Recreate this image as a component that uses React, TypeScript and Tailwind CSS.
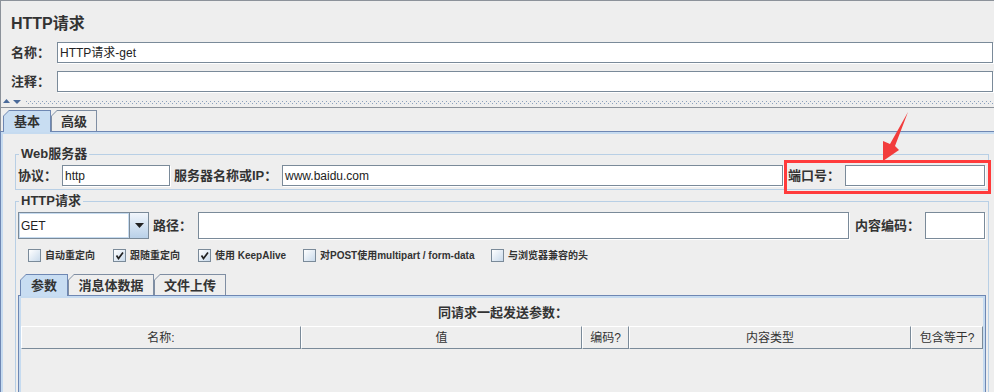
import React from "react";

const border = "border-[#7a8a99]";

function TextBox({ value = "", className = "" }: { value?: string; className?: string }) {
  return (
    <div
      className={`flex items-center border ${border} bg-white pl-[2px] text-[12px] text-[#222] shadow-[1px_1px_0_#ffffff] ${className}`}
    >
      {value}
    </div>
  );
}

function Label({ text, className = "" }: { text: string; className?: string }) {
  return <div className={`shrink-0 text-[13px] font-bold text-[#333] whitespace-nowrap ${className}`}>{text}</div>;
}

function Tab({ label, active, width }: { label: string; active?: boolean; width: string }) {
  return (
    <div
      className={`relative ${active ? "z-10 -mb-px h-[22px] bg-[#6e87b3]" : "h-[21px] bg-[#7f8ea3]"} ${width} px-px pt-px [clip-path:polygon(6px_0,100%_0,100%_100%,0_100%,0_6px)]`}
    >
      <div
        className={`flex h-full items-center justify-center pt-px text-[13px] font-bold text-[#333] ${active ? "bg-[#c8ddf2]" : "bg-[#eeeeee]"} [clip-path:polygon(5px_0,100%_0,100%_100%,0_100%,0_5px)]`}
      >
        {label}
      </div>
    </div>
  );
}

function Check({ checked, label, width }: { checked?: boolean; label: string; width?: string }) {
  return (
    <div className={`flex h-[13px] items-center ${width ?? ""}`}>
      <div className={`relative h-[13px] w-[13px] shrink-0 border ${border} bg-gradient-to-br from-white to-[#c9daeb]`}>
        {checked && (
          <svg className="absolute left-0 top-0" width="11" height="11" viewBox="0 0 11 11">
            <path d="M2.5 5.5 L4.5 8.5 L9 2.5" fill="none" stroke="#222" strokeWidth="1.7" />
          </svg>
        )}
      </div>
      <span className="ml-[4px] whitespace-nowrap text-[10px] font-bold text-[#333]">{label}</span>
    </div>
  );
}

function Group({ title, className = "", children }: { title: string; className?: string; children: React.ReactNode }) {
  return (
    <div className={`relative ml-[14px] w-[974px] border border-[#b8cfe5] ${className}`}>
      <div className="absolute left-[3px] top-[-9px] bg-[#eeeeee] px-[2px] text-[13px] font-bold leading-[16px] text-[#333]">
        {title}
      </div>
      {children}
    </div>
  );
}

const headers: [string, string][] = [
  ["名称:", "w-[280px]"],
  ["值", "w-[281px]"],
  ["编码?", "w-[47px]"],
  ["内容类型", "w-[282px]"],
  ["包含等于?", "w-[72px]"],
];

export default function App() {
  return (
    <div className="relative h-[392px] w-[994px] overflow-hidden bg-[#eeeeee] font-['Liberation_Sans','Noto_Sans_CJK_SC',sans-serif] text-[#333]">
      {/* header area */}
      <div className="border-l border-t border-[#8c929a] pl-[10px] pr-px pt-[13px]">
        <div className="text-[16px] font-bold leading-[20px] text-[#333]">HTTP请求</div>
        <div className="mt-[8px] flex h-[21px] items-center">
          <Label text="名称：" className="w-[46px]" />
          <TextBox value="HTTP请求-get" className="h-full flex-1" />
        </div>
        <div className="mt-[8px] flex h-[21px] items-center">
          <Label text="注释：" className="w-[46px]" />
          <TextBox className="h-full flex-1" />
        </div>
      </div>

      {/* split divider */}
      <div className="flex h-[16px] items-start border-b border-l border-[#8c929a] pl-[2px] pt-[7px]">
        <svg width="20" height="5" viewBox="0 0 20 5" className="shrink-0">
          <polygon points="0,4 3.5,0 7,4" fill="#4a6a9a" />
          <polygon points="10,1 18,1 14,5" fill="#4a6a9a" />
        </svg>
        <div className="ml-[3px] flex-1 pt-[2px]">
          <div className="h-px bg-[linear-gradient(90deg,#8aa0bd_1px,transparent_1px)] bg-[length:4px_1px]" />
          <div className="mt-px h-px bg-[linear-gradient(90deg,#8aa0bd_1px,transparent_1px)] bg-[length:4px_1px] bg-[position:2px_0]" />
        </div>
      </div>

      {/* outer tabs */}
      <div className="flex h-[23px] items-end border-l border-[#8c929a] pl-[2px]">
        <Tab label="基本" active width="w-[48px]" />
        <Tab label="高级" width="w-[46px]" />
      </div>

      <div className="h-[270px] w-[1000px] border-l border-t border-[#6e87b3] shadow-[inset_2px_2px_0_#c6dbf0]">
        <Group title="Web服务器" className="mt-[22px] pb-[3px] pl-px pr-[3px] pt-[10px]">
          <div className="flex h-[21px] items-center pl-px">
            <Label text="协议：" className="w-[44px]" />
            <TextBox value="http" className="h-full w-[108px]" />
            <Label text="服务器名称或IP：" className="ml-[4px] w-[108px]" />
            <TextBox value="www.baidu.com" className="h-full flex-1" />
            <Label text="端口号：" className="ml-[5px] w-[57px]" />
            <TextBox className="h-full w-[140px]" />
          </div>
        </Group>

        <Group title="HTTP请求" className="mt-[11px] h-[220px] pl-[2px] pr-[3px] pt-[10px]">
          <div className="flex h-[27px] items-center">
            <div className={`flex h-full w-[131px] shrink-0 border ${border} bg-white`}>
              <div className="flex flex-1 items-center border border-[#c6dbf0] pl-[1px] text-[12px] text-[#222]">GET</div>
              <div className={`flex w-[19px] items-center justify-center border-l ${border} bg-gradient-to-b from-[#f1f6fc] to-[#b9d0e8]`}>
                <svg width="9" height="5" viewBox="0 0 9 5">
                  <polygon points="0,0 9,0 4.5,5" fill="#222" />
                </svg>
              </div>
            </div>
            <Label text="路径：" className="ml-[4px] w-[45px]" />
            <TextBox className="h-full flex-1" />
            <Label text="内容编码：" className="ml-[6px] w-[70px]" />
            <TextBox className="h-full w-[60px]" />
          </div>

          <div className="mt-[10px] flex pl-[10px]">
            <Check label="自动重定向" width="w-[85px]" />
            <Check label="跟随重定向" checked width="w-[85px]" />
            <Check label="使用 KeepAlive" checked width="w-[105px]" />
            <Check label="对POST使用multipart / form-data" width="w-[188px]" />
            <Check label="与浏览器兼容的头" />
          </div>

          <div className="mt-[12px] flex h-[21px] items-end pl-[2px]">
            <Tab label="参数" active width="w-[48px]" />
            <Tab label="消息体数据" width="w-[86px]" />
            <Tab label="文件上传" width="w-[72px]" />
          </div>
          <div className="h-[120px] w-[968px] border-l border-r border-t border-[#6e87b3] pl-[2px] shadow-[inset_2px_2px_0_#c6dbf0,inset_-2px_0_0_#c6dbf0]">
            <div className="flex h-[30px] items-center justify-center pt-[4px] text-[13px] font-bold text-[#333]">
              同请求一起发送参数：
            </div>
            <div className="flex h-[23px]">
              {headers.map(([h, w]) => (
                <div
                  key={h}
                  className={`${w} flex items-center justify-center border border-b-[#7a8a99] border-l-white border-r-[#7a8a99] border-t-white text-[12px] text-[#333]`}
                >
                  {h}
                </div>
              ))}
            </div>
          </div>
        </Group>
      </div>

      {/* annotation */}
      <div className="absolute left-[784px] top-[160px] h-[34px] w-[207px] border-[3px] border-[#ff3b3b]" />
      <svg className="absolute left-[875px] top-[108px]" width="40" height="58" viewBox="0 0 40 58">
        <polygon points="33,4 20,38 24,42 8,53 8,33 15,36" fill="#f23c3c" />
      </svg>
    </div>
  );
}
